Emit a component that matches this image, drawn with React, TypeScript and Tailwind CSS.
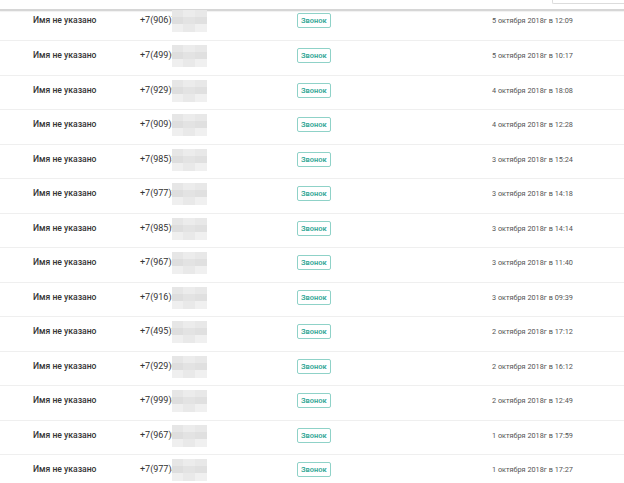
import React from 'react';

type Call = { phone: string; date: string };

const calls: Call[] = [
  { phone: '+7(906)7', date: '5 октября 2018г в 12:09' },
  { phone: '+7(499)6', date: '5 октября 2018г в 10:17' },
  { phone: '+7(929)9', date: '4 октября 2018г в 18:08' },
  { phone: '+7(909)1', date: '4 октября 2018г в 12:28' },
  { phone: '+7(985)3', date: '3 октября 2018г в 15:24' },
  { phone: '+7(977)3', date: '3 октября 2018г в 14:18' },
  { phone: '+7(985)9', date: '3 октября 2018г в 14:14' },
  { phone: '+7(967)1', date: '3 октября 2018г в 11:40' },
  { phone: '+7(916)5', date: '3 октября 2018г в 09:39' },
  { phone: '+7(495)2', date: '2 октября 2018г в 17:12' },
  { phone: '+7(929)6', date: '2 октября 2018г в 16:12' },
  { phone: '+7(999)8', date: '2 октября 2018г в 12:49' },
  { phone: '+7(967)0', date: '1 октября 2018г в 17:59' },
  { phone: '+7(977)4', date: '1 октября 2018г в 17:27' },
];

// pixelated blur over the hidden part of the number
const Mosaic: React.FC = () => (
  <span className="relative ml-[-5px] inline-grid h-[22px] w-[35px] grid-cols-3 grid-rows-3">
    <span className="bg-[#e6e6e6]" />
    <span className="bg-[#ececec]" />
    <span className="bg-[#e8e8e8]" />
    <span className="bg-[#dedede]" />
    <span className="bg-[#e3e3e3]" />
    <span className="bg-[#e0e0e0]" />
    <span className="bg-[#efefef]" />
    <span className="bg-[#e9e9e9]" />
    <span className="bg-[#f0f0f0]" />
  </span>
);

const Row: React.FC<{ call: Call; index: number }> = ({ call, index }) => {
  const height = index === 0 ? 'h-[30px] pt-[2px]' : index % 2 === 1 ? 'h-[35px] pt-[7px]' : 'h-[34px] pt-[7px]';
  return (
    <div className={`flex items-start border-b border-[#efefef] leading-none ${height}`}>
      <div className="grid h-[14px] w-full grid-cols-[107px_157px_195px_1fr] items-center pl-[33px]">
        <span className="text-[8.6px] font-medium text-[#333]">Имя не указано</span>
        <span className="flex h-[14px] items-center text-[9px] text-[#333]">
          {call.phone}
          <Mosaic />
        </span>
        <span className="flex">
          <span className="inline-flex h-[15px] items-center rounded-[2px] border border-[#8fd2c8] px-[3px] text-[7.5px] font-semibold text-[#35a797]">
            Звонок
          </span>
        </span>
        <span className="text-[7.3px] text-[#555]">{call.date}</span>
      </div>
    </div>
  );
};

const App: React.FC = () => {
  return (
    <div className="h-[483px] w-[624px] overflow-hidden bg-white font-['Roboto',sans-serif]">
      <div className="flex h-[9px] justify-end">
        <div className="h-[4px] w-[72px] rounded-bl-[2px] border-b border-l border-[#dcdcdc]" />
      </div>
      <div className="h-[2px] bg-[#d6d6d6] shadow-[0_1px_1px_rgba(0,0,0,0.06)]" />
      {calls.map((call, i) => (
        <Row key={call.date} call={call} index={i} />
      ))}
    </div>
  );
};

export default App;
